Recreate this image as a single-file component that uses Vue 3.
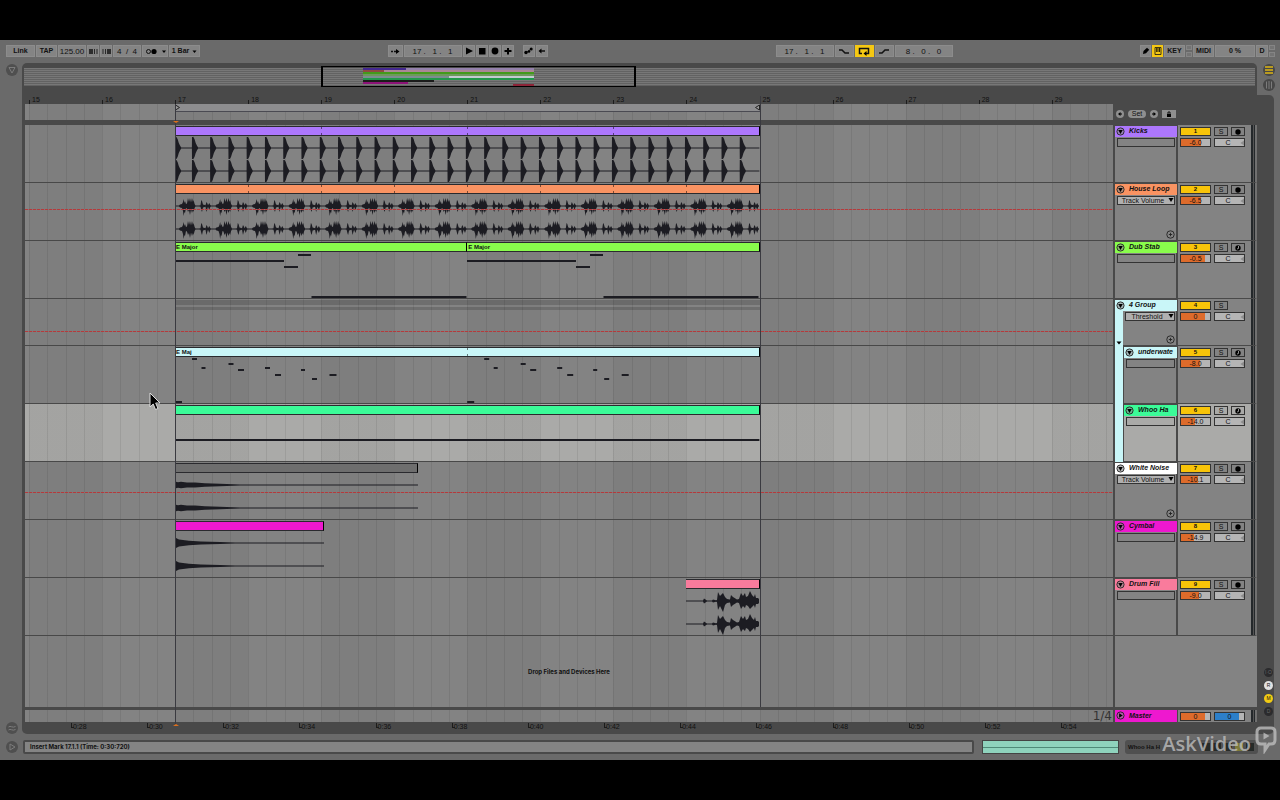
<template>
  <main class="daw">
    <header class="toolbar">
      <div class="group">
        <button class="tool w29" type="button">Link</button>
        <button class="tool w21" type="button">TAP</button>
        <input class="tool num w28" aria-label="Tempo" value="125.00" />
        <button class="tool w12" type="button" aria-label="Nudge down">
          <svg width="9" height="7"><path d="M1 1v5M3 1v5" class="heavy" /><path d="M5.5 1v5M8 1v5" class="thin" /></svg>
        </button>
        <button class="tool w12" type="button" aria-label="Nudge up">
          <svg width="9" height="7"><path d="M1 1v5M3.5 1v5" class="thin" /><path d="M6 1v5M8 1v5" class="heavy" /></svg>
        </button>
        <input class="tool num w28" aria-label="Time signature" value="4  /  4" />
        <button class="tool w26" type="button" aria-label="Metronome">
          <svg width="21" height="7">
            <circle cx="3.5" cy="3.5" r="2" class="outline" />
            <circle cx="9" cy="3.5" r="2.6" />
            <path d="M17 2.5h4l-2 2.5z" />
          </svg>
        </button>
        <button class="tool w31" type="button">
          1 Bar
          <svg width="8" height="7"><path d="M3.5 2.5h4l-2 2.5z" /></svg>
        </button>
      </div>

      <div class="middle">
        <div class="group">
          <button class="tool w15" type="button" aria-label="Follow">
            <svg width="10" height="7"><path d="M1 3.5h2M4 3.5h4" class="heavy" /><path d="M6 1l3.5 2.5L6 6z" /></svg>
          </button>
          <input class="tool num w58" aria-label="Arrangement position" value="17 .   1 .   1" />
          <button class="tool w12" type="button" aria-label="Play">
            <svg width="8" height="8"><path d="M1 .5l7 3.5L1 7.5z" /></svg>
          </button>
          <button class="tool w12" type="button" aria-label="Stop">
            <svg width="8" height="8"><path d="M1 1h6.5v6.5H1z" /></svg>
          </button>
          <button class="tool w12" type="button" aria-label="Record">
            <svg width="8" height="8"><circle cx="4" cy="4" r="3.4" /></svg>
          </button>
          <button class="tool w12" type="button" aria-label="Overdub">
            <svg width="8" height="8"><path d="M3 1h2v2h2.5v2H5v2.5H3V5H.5V3H3z" /></svg>
          </button>
          <span class="space"></span>
          <button class="tool w12" type="button" aria-label="Automation arm">
            <svg width="9" height="8">
              <path d="M2 6l5-4" class="line" /><circle cx="2" cy="5.5" r="1.7" /><circle cx="5" cy="4.5" r="1.3" /><circle cx="7.2" cy="2" r="1.5" />
            </svg>
          </button>
          <button class="tool w12" type="button" aria-label="Re-enable automation">
            <svg width="8" height="8"><path d="M.5 4l3-2.5v5z" /><path d="M3 4h4" class="heavy" /></svg>
          </button>
        </div>
        <div class="group">
          <input class="tool num w58" aria-label="Loop start" value="17 .   1 .   1" />
          <button class="tool w19" type="button" aria-label="Punch in">
            <svg width="12" height="7"><path d="M1 2h3l3 3h4" class="heavy" /></svg>
          </button>
          <button class="tool on w19" type="button" aria-label="Loop">
            <svg width="12" height="9"><path d="M4 6.5H1.5v-5h9v5H7.5" class="heavy" /><path d="M8.5 4v5L5.5 6.5z" /></svg>
          </button>
          <button class="tool w19" type="button" aria-label="Punch out">
            <svg width="12" height="7"><path d="M1 5h3l3-3h4" class="heavy" /></svg>
          </button>
          <input class="tool num w58" aria-label="Loop length" value="8 .   0 .   0" />
        </div>
      </div>

      <div class="group">
        <button class="tool w11" type="button" aria-label="Draw mode">
          <svg width="8" height="8"><path d="M1 7l.5-3L5 .8l2.2 2L4 6.3z" /></svg>
        </button>
        <button class="tool on w11" type="button" aria-label="Computer MIDI keyboard">
          <svg width="8" height="8"><path d="M1 .5h6v7H1z" class="thin" /><path d="M2.3 1h1.2v4H2.3zM4.6 1h1.2v4H4.6z" /></svg>
        </button>
        <button class="tool w21" type="button">KEY</button>
        <span class="leds"><i></i><i></i></span>
        <button class="tool w21" type="button">MIDI</button>
        <output class="tool w40">0 %</output>
        <button class="tool w12" type="button">D</button>
        <span class="leds"><i></i><i></i></span>
      </div>
    </header>

    <div class="body">
      <aside class="gutter">
        <button class="round" type="button" aria-label="Show browser">
          <svg viewBox="0 0 12 12"><path d="M3 3.5h6L6 9z" /></svg>
        </button>
        <button class="round" type="button" aria-label="Show groove pool">
          <svg viewBox="0 0 12 12"><path d="M2.5 5c2-2 4 1.5 7-.5M2.5 8c2-2 4 1.5 7-.5" /></svg>
        </button>
      </aside>

      <section class="panel" aria-label="Arrangement">
        <div class="overview">
          <svg viewBox="0 0 1231 18" preserveAspectRatio="none">
            <rect v-for="(o, i) in overview" :key="i" :x="o[0]" :y="o[1]" :width="o[2]" :height="2" :fill="o[3]" />
          </svg>
          <div class="viewport"></div>
        </div>

        <div class="arrangement">
          <div class="row">
            <div class="ruler">
              <div class="bars">
                <span v-for="n in 15" :key="n" class="bar" :style="{ left: at(n + 14) }">{{ n + 14 }}</span>
              </div>
              <div class="strip beats">
                <div class="loop" :style="span(17, 25)">
                  <svg width="5" height="7"><path d="M.5 1L4.5 3.5.5 6z" /></svg>
                  <svg width="5" height="7"><path d="M4.5 1L.5 3.5 4.5 6z" /></svg>
                </div>
              </div>
            </div>
            <div class="locators">
              <button class="pill" type="button" aria-label="Previous locator"><svg width="6" height="6"><path d="M1 3l2.5-2v4z" /><path d="M3 2.5h2v1H3z" /></svg></button>
              <button class="pill set" type="button">Set</button>
              <button class="pill" type="button" aria-label="Next locator"><svg width="6" height="6"><path d="M5 3L2.5 1v4z" /><path d="M1 2.5h2v1H1z" /></svg></button>
              <button class="pill lock" type="button" aria-label="Lock envelopes"><svg width="6" height="6"><path d="M1 3h4v3H1z" /><path d="M2 3V1h2v2" class="line" /></svg></button>
            </div>
          </div>

          <div
            v-for="t in tracks"
            :key="t.id"
            class="row track"
            :class="{ selected: t.selected, short: t.group, compact: t.nested }"
          >
            <div class="lane beats">
              <div v-for="(c, i) in t.clips" :key="i" class="clip" :style="span(c.start, c.end)">
                <div v-if="!t.group" class="clip-head" :style="{ background: c.color || t.color }">
                  {{ c.label }}
                  <i v-for="m in marks(c)" :key="m" class="mark" :style="{ left: m + '%' }"></i>
                </div>
                <div v-if="t.group" class="group-clips"></div>
                <svg v-else :viewBox="`0 0 ${(c.end - c.start) * BAR} 46`" preserveAspectRatio="none">
                  <path v-if="c.wave" :d="c.wave" class="wave" />
                  <rect v-for="(n, k) in c.notes" :key="k" :x="n[0]" :y="n[1]" :width="n[2]" height="2" class="note" />
                </svg>
              </div>
              <div v-if="t.automation" class="automation" :style="{ top: t.automation + 'px' }"></div>
            </div>

            <div class="head">
              <i v-if="t.nested" class="group-bar"></i>
              <div class="name-cell">
                <div class="name" :style="{ background: t.color }">
                  <button class="fold" type="button" :aria-label="'Fold ' + t.name">
                    <svg viewBox="0 0 10 10"><circle cx="5" cy="5" r="4" /><path d="M2.5 3.2h5L5 7.7z" /></svg>
                  </button>
                  <span>{{ t.name }}</span>
                </div>
                <div class="name-body">
                  <i v-if="t.group" class="group-bar"><svg width="6" height="4"><path d="M.5.5h5L3 3.5z" /></svg></i>
                  <div class="chooser">
                    <div class="pick" :class="{ filled: t.device }">
                      <select :aria-label="t.name + ' automation'">
                        <option>{{ t.device }}</option>
                      </select>
                      <svg v-if="t.device" width="6" height="6"><path d="M.5 1h5L3 5z" /></svg>
                    </div>
                    <button v-if="t.device" class="add" type="button" aria-label="Add automation lane">
                      <svg viewBox="0 0 8 8"><circle cx="4" cy="4" r="3.3" /><path d="M4 2.5v3M2.5 4h3" /></svg>
                    </button>
                  </div>
                </div>
              </div>
              <div class="mixer">
                <button class="box active" type="button">{{ t.id }}</button>
                <button class="box" type="button" aria-label="Solo">S</button>
                <button v-if="!t.group" class="box" type="button" aria-label="Arm">
                  <svg width="8" height="8">
                    <circle cx="4" cy="4" r="2.7" />
                    <path v-if="t.midi" d="M4.5 2v2.5L3 5" class="slot" />
                  </svg>
                </button>
                <i v-else></i>
                <input class="box level" :aria-label="t.name + ' volume'" :value="t.volume" :style="{ '--fill': t.fill + '%' }" />
                <div class="box pan">
                  <input :aria-label="t.name + ' pan'" value="C" />
                  <svg width="4" height="6"><path d="M4 .5v5L.5 3z" /></svg>
                </div>
              </div>
              <div class="meter"></div>
            </div>
          </div>

          <div class="row drop">
            <div class="lane beats">Drop Files and Devices Here</div>
            <div class="blank"></div>
          </div>

          <div class="row master">
            <div class="lane beats"><span class="zoom">1/4</span></div>
            <div class="head">
              <div class="name-cell">
                <div class="name">
                  <button class="fold" type="button" aria-label="Unfold Master">
                    <svg viewBox="0 0 10 10"><circle cx="5" cy="5" r="4" /><path d="M3.5 2.5v5L7.5 5z" /></svg>
                  </button>
                  <span>Master</span>
                </div>
              </div>
              <div class="mixer">
                <input class="box level" aria-label="Master volume" value="0" :style="{ '--fill': '83%' }" />
                <input class="box level cue" aria-label="Cue volume" value="0" :style="{ '--fill': '83%' }" />
              </div>
              <div class="meter"></div>
            </div>
          </div>

          <div class="times">
            <span v-for="n in 14" :key="n" class="time" :style="{ left: (46 + (n - 1) * 76.15) / 10.88 + '%' }">0:{{ 26 + n * 2 }}</span>
          </div>

          <div class="guides">
            <i class="guide start" :style="{ left: at(17) }"></i>
            <i class="guide end" :style="{ left: at(25) }"></i>
          </div>
        </div>
      </section>

      <aside class="rail">
        <div class="notch">
          <button class="round view" type="button" aria-label="Arrangement view">
            <svg viewBox="0 0 12 12"><path d="M2 2h8v2H2zM2 5h8v2H2zM2 8h8v2H2z" class="gold" /></svg>
          </button>
          <button class="round view" type="button" aria-label="Session view">
            <svg viewBox="0 0 12 12"><path d="M3.5 2.5v7M6 2v8M8.5 2.5v7" /></svg>
          </button>
        </div>
        <div class="toggles">
          <button v-for="g in toggles" :key="g.text" class="toggle" :class="g.kind" type="button">{{ g.text }}</button>
        </div>
      </aside>
    </div>

    <footer class="status">
      <button class="round" type="button" aria-label="Show info">
        <svg viewBox="0 0 12 12"><path d="M4 3l5 3-5 3z" /></svg>
      </button>
      <p class="message">Insert Mark 17.1.1 (Time: 0:30:720)</p>
      <div class="preview"></div>
      <div class="devices">
        <span>Whoo Ha H</span>
        <div class="chain"><i></i><i></i><i></i><i class="yellow"></i><i></i></div>
      </div>
    </footer>

    <div class="watermark">
      <span>AskVideo</span>
      <svg width="22" height="28" viewBox="0 0 22 28">
        <path d="M6 2h10q4 0 4 4v8q0 4-4 4h-2l-4 6v-6H6q-4 0-4-4V6q0-4 4-4z" />
        <path d="M8.5 6.5v7l6-3.5z" class="solid" />
      </svg>
    </div>
    <svg class="cursor" width="12" height="19" viewBox="0 0 12 19">
      <path d="M1 1v14l3.2-3 2.3 5.5 2.5-1L6.7 11H11z" />
    </svg>
  </main>
</template>

<script setup>
const BAR = 73.05
const FIRST = 14.945
const VISIBLE = 14.894

const at = (bar) => ((bar - FIRST) / VISIBLE) * 100 + '%'
const span = (from, to) => ({ left: at(from), width: ((to - from) / VISIBLE) * 100 + '%' })

const marks = (clip) => {
  if (!clip.loop) return []
  const length = clip.end - clip.start
  const out = []
  for (let b = clip.loop; b < length; b += clip.loop) out.push((b / length) * 100)
  return out
}

// Envelope points are [x, up, down]; one closed shape per channel
const envelope = (points, centers = [12, 35]) =>
  centers
    .map((c) => {
      const top = points.map(([x, up]) => `${x.toFixed(1)} ${c - up}`)
      const bottom = points.map(([x, up, down]) => `${x.toFixed(1)} ${c + (down ?? up)}`).reverse()
      return `M${top.concat(bottom).join('L')}Z`
    })
    .join('')

const kickPoints = []
for (let i = 0; i < 32; i++) {
  const x = i * (BAR / 4)
  const s = i ? x - 1.4 : 0
  kickPoints.push([s, 0.5], [s + 0.1, 11], [s + 1.4, 11], [s + 2.6, 9], [s + 3.8, 5], [s + 5, 2.5], [s + 6.2, 0.5])
}
kickPoints.push([8 * BAR, 0.5])

const hit = [
  [0, 0.6], [4, 0.6], [5, 1.5], [7, 2], [8, 4, 5], [8.6, 7, 10], [9.4, 3, 6], [10, 5, 7], [11, 2], [12, 2.5],
  [13, 8, 6], [14, 4], [15, 8, 9], [16, 3.5], [17, 8, 7], [18, 4], [18.6, 6], [19.6, 2], [20.5, 0.6], [24, 0.6],
  [25.5, 0.8], [26.3, 6, 4], [27, 5, 6], [28, 1.5], [30.5, 0.8], [31.5, 4, 6], [32.4, 2.5], [33, 0.8],
  [34.3, 3, 4], [35.3, 1], [36, 0.6]
]
const loopPoints = []
for (let i = 0; i < 16; i++) {
  hit.forEach(([x, up, down]) => loopPoints.push([x + (i * BAR) / 2, up, down]))
}

const fillPoints = [
  [0, 0.5], [17, 0.5], [18, 2.5], [21, 0.6], [26, 0.6], [27, 1.5], [30, 0.8], [31, 1], [32, 9], [34, 5],
  [36, 7, 9], [37, 8, 11], [39, 4], [41, 2], [44, 1.5], [45, 6], [47, 4], [51, 1.5], [53, 2], [55, 8],
  [57, 5], [59, 8, 7], [60, 4], [62, 5], [64, 10, 8], [66, 6], [68, 4], [69, 7], [70, 3], [72, 3], [73, 2]
]
const noisePoints = [[0, 3.4], [3, 2.8], [6, 3.3], [12, 2.6], [20, 2.4], [30, 1.7], [45, 1.2], [65, 0.6], [243, 0.5]]
const cymbalPoints = [[0, 8], [1, 5], [4, 3.5], [8, 3], [14, 2.2], [26, 1.6], [45, 0.9], [60, 0.5], [149, 0.5]]

const stab = [[0, 8, 109], [109, 14, 14], [123, 2, 13], [136.5, 44, 155]]
const melody = [
  [0, 44, 7], [17, 1, 5], [26.5, 10, 4], [53.5, 6, 5], [63, 12, 6], [90, 10, 5], [100, 17, 6],
  [126, 12, 4], [137, 21, 5], [154.5, 17, 7]
]
const repeated = melody.concat(melody.map(([x, y, w]) => [x + 4 * BAR, y, w]))

const tracks = [
  { id: 1, name: 'Kicks', color: '#ad77fd', volume: '-6.0', fill: 70,
    clips: [{ start: 17, end: 25, loop: 2, wave: envelope(kickPoints) }] },
  { id: 2, name: 'House Loop', color: '#f99362', volume: '-6.5', fill: 68, device: 'Track Volume', automation: 26,
    clips: [{ start: 17, end: 25, loop: 1, wave: envelope(loopPoints) }] },
  { id: 3, name: 'Dub Stab', color: '#89fc4c', volume: '-0.5', fill: 83, midi: true,
    clips: [
      { start: 17, end: 21, label: 'E Major', notes: stab },
      { start: 21, end: 25, label: 'E Major', notes: stab }
    ] },
  { id: 4, name: '4 Group', color: '#c9f6f8', volume: '0', fill: 83, device: 'Threshold', group: true, automation: 32,
    clips: [{ start: 17, end: 25 }] },
  { id: 5, name: 'underwate', color: '#c9f6f8', volume: '-8.0', fill: 64, nested: true, midi: true,
    clips: [{ start: 17, end: 25, label: 'E Maj', loop: 4, notes: repeated }] },
  { id: 6, name: 'Whoo Ha', color: '#3bfb98', volume: '-14.0', fill: 49, nested: true, midi: true, selected: true,
    clips: [{ start: 17, end: 25, notes: [[0, 24, 584.4]] }] },
  { id: 7, name: 'White Noise', color: '#ffffff', volume: '-10.1', fill: 60, device: 'Track Volume', automation: 30,
    clips: [{ start: 17, end: 20.33, color: '#6e6e6e', wave: envelope(noisePoints) }] },
  { id: 8, name: 'Cymbal', color: '#ee18cf', volume: '-14.9', fill: 45,
    clips: [{ start: 17, end: 19.04, wave: envelope(cymbalPoints) }] },
  { id: 9, name: 'Drum Fill', color: '#f97b9c', volume: '-9.0', fill: 62,
    clips: [{ start: 24, end: 25, wave: envelope(fillPoints) }] }
]

const overview = [
  [339, 0, 43, '#44288f'], [382, 0, 128, '#9481ab'],
  [339, 2, 21, '#8d4a42'], [360, 2, 150, '#a98795'],
  [339, 4, 171, '#439a1b'],
  [339, 6, 171, '#6c9a5c'],
  [339, 8, 86, '#7b8d8f'], [425, 8, 85, '#c3cbcf'],
  [339, 10, 171, '#21984b'],
  [339, 12, 71, '#1b1b1b'],
  [339, 14, 45, '#8c1277'],
  [489, 16, 21, '#8c2438']
]

const toggles = [
  { text: 'I·O', kind: 'off' },
  { text: 'R', kind: 'white' },
  { text: 'M', kind: 'yellow' },
  { text: 'D', kind: 'off' }
]
</script>

<style>
body {
  margin: 0;
  background: #000;
}
</style>

<style scoped>
* {
  box-sizing: border-box;
}

.daw {
  --ui: #6a6a6a;
  --dark: #494949;
  --ink: #1c1c22;
  position: relative;
  margin: 40px 0;
  overflow: hidden;
  background: var(--ui);
  color: #111;
  font-family: "Liberation Sans", Arial, sans-serif;
  font-size: 7px;
  line-height: 8px;
}

button,
input,
select,
output {
  margin: 0;
  padding: 0;
  border: 0;
  border-radius: 0;
  background: none;
  color: inherit;
  font: inherit;
}

svg {
  display: block;
}

.toolbar {
  display: flex;
  justify-content: space-between;
  height: 23px;
  padding: 5px 5px 0 6px;
}

.middle {
  display: flex;
  gap: 228px;
}

.group {
  display: flex;
  gap: 1px;
}

.tool {
  display: flex;
  align-items: center;
  justify-content: center;
  height: 12px;
  border: 1px solid #8c8c8c;
  background: #848484;
  font-weight: 700;
  text-align: center;
}

.tool.num {
  font-size: 8px;
  font-weight: 400;
  white-space: pre;
}

.tool.on {
  border-color: #f5c813;
  background: #f5c813;
}

.tool .line,
.tool .thin,
.tool .heavy,
.tool .outline {
  fill: none;
  stroke: #111;
}

.tool .heavy {
  stroke-width: 1.5;
}

.tool .thin {
  stroke-width: 0.8;
}

.w11 { width: 11px; }
.w12 { width: 12px; }
.w15 { width: 15px; }
.w19 { width: 19px; }
.w21 { width: 21px; }
.w26 { width: 26px; }
.w28 { width: 28px; }
.w29 { width: 29px; }
.w31 { width: 31px; }
.w40 { width: 40px; }
.w58 { width: 58px; }

.space {
  width: 7px;
}

.leds {
  display: flex;
  flex-direction: column;
  justify-content: space-between;
  width: 6px;
  height: 12px;
}

.leds i {
  height: 5px;
  border: 1px solid #858585;
  background: #747474;
}

.body {
  display: flex;
}

.gutter {
  display: flex;
  flex-direction: column;
  justify-content: space-between;
  width: 22px;
  padding: 1px 0 0 6px;
}

.round {
  flex: none;
  width: 12px;
  height: 12px;
  border-radius: 50%;
  background: #4f4f4f;
}

.round path {
  fill: none;
  stroke: #7c7c7c;
}

.round .gold {
  fill: #b89a20;
  stroke: none;
}

.panel {
  flex: 1;
  min-width: 0;
  padding-top: 5px;
  border-radius: 5px 5px 0 5px;
  background: var(--dark);
}

.overview {
  position: relative;
  height: 18px;
  margin: 0 2px;
  background: repeating-linear-gradient(#777 0 1px, #626262 1px 2px);
}

.overview svg {
  width: 100%;
  height: 100%;
}

.viewport {
  position: absolute;
  top: -2px;
  bottom: -1px;
  left: 24.1%;
  width: 25.6%;
  border: 1px solid #000;
  border-width: 1px 2px;
}

.arrangement {
  position: relative;
  padding-left: 3px;
}

.row {
  display: flex;
}

.beats {
  background:
    repeating-linear-gradient(90deg, rgb(0 0 0 / 8%) 0.37%, rgb(0 0 0 / 8%) calc(0.37% + 1px), transparent calc(0.37% + 1px), transparent 2.0485%),
    repeating-linear-gradient(90deg, rgb(0 0 0 / 4%) 0.37%, rgb(0 0 0 / 4%) 7.084%, transparent 7.084%, transparent 13.798%),
    var(--lane, #838383);
}

.ruler {
  flex: 1;
  min-width: 0;
  margin-bottom: 5px;
}

.bars {
  position: relative;
  height: 18px;
}

.bar {
  position: absolute;
  bottom: 0;
  padding-left: 3px;
}

.bar::before {
  position: absolute;
  bottom: 0;
  left: 0;
  width: 1px;
  height: 4px;
  background: #1c1c1c;
  content: "";
}

.strip {
  position: relative;
  height: 16px;
}

.loop {
  position: absolute;
  top: 0;
  display: flex;
  justify-content: space-between;
  height: 8px;
  border-bottom: 1px solid #4a4a52;
  background: #8d8d8f;
}

.loop path {
  fill: #999;
  stroke: #222;
}

.locators {
  display: flex;
  align-items: center;
  gap: 4px;
  width: 144px;
  padding: 20px 0 3px 3px;
}

.pill {
  display: flex;
  align-items: center;
  justify-content: center;
  width: 8px;
  height: 8px;
  border-radius: 4px;
  background: #8f8f8f;
}

.pill.set {
  width: 18px;
}

.pill.lock {
  width: 14px;
  border-radius: 0;
}

.pill .line {
  fill: none;
  stroke: #111;
}

.track {
  height: 58px;
}

.track.short {
  height: 47px;
}

.lane {
  position: relative;
  flex: 1;
  min-width: 0;
  border-bottom: 1px solid #484848;
}

.selected {
  --lane: #aaaaa8;
}

.clip {
  position: absolute;
  top: 1px;
  bottom: 0;
  display: flex;
  flex-direction: column;
}

.selected .clip {
  border-left: 1px solid #d98b4a;
}

.clip svg {
  flex: 1;
  width: 100%;
  min-height: 0;
}

.clip-head {
  position: relative;
  height: 10px;
  padding-left: 1px;
  border: 1px solid #2a2a2e;
  border-right-color: #000;
  border-left-width: 0;
  font-size: 6px;
  font-weight: 700;
}

.mark {
  position: absolute;
  top: 0;
  bottom: 0;
  width: 1px;
  background: linear-gradient(rgb(0 0 0 / 50%) 0 2px, transparent 2px 6px, rgb(0 0 0 / 50%) 6px);
}

.group-clips {
  height: 10px;
  background: linear-gradient(rgb(0 0 0 / 16%) 0 5px, transparent 5px 7px, rgb(0 0 0 / 16%) 7px);
}

.wave,
.note {
  fill: var(--ink);
}

.automation {
  position: absolute;
  right: 0;
  left: 0;
  height: 1px;
  background: repeating-linear-gradient(90deg, #b53a3c 0 3px, #8a7272 3px 4px);
}

.head,
.blank {
  display: flex;
  width: 144px;
  border-left: 2px solid var(--dark);
}

.name-cell {
  display: flex;
  flex: 1;
  flex-direction: column;
  border-right: 1px solid var(--dark);
}

.name {
  display: flex;
  align-items: center;
  gap: 4px;
  height: 12px;
  padding: 0 0 1px 1px;
  border-top: 1px solid var(--dark);
  font-style: italic;
  font-weight: 700;
  white-space: nowrap;
}

.fold {
  width: 9px;
  height: 9px;
}

.fold circle {
  fill: #8a8a8a;
  fill-opacity: 0.6;
  stroke: #222;
}

.name-body {
  display: flex;
  flex: 1;
  border-right: 1px solid var(--dark);
  background: var(--lane, #838383);
}

.group-bar {
  display: flex;
  flex: none;
  align-items: flex-end;
  width: 8px;
  padding: 0 1px 1px;
  background: #c9f6f8;
}

.compact .group-bar {
  width: 9px;
  border-right: 1px solid var(--dark);
}

.chooser {
  display: flex;
  flex: 1;
  flex-direction: column;
  align-items: flex-end;
  justify-content: space-between;
  padding: 1px 1px 1px 2px;
  border-bottom: 1px solid var(--dark);
}

.pick {
  position: relative;
  width: 100%;
  height: 9px;
  border: 1px solid #333;
}

.pick.filled {
  background: #b0b0b0;
}

.pick select {
  display: block;
  width: 100%;
  height: 7px;
  padding-right: 6px;
  appearance: none;
  line-height: 7px;
  text-align-last: center;
}

.pick svg {
  position: absolute;
  top: 0;
  right: 0;
  pointer-events: none;
}

.add {
  width: 9px;
  height: 9px;
}

.add svg {
  fill: none;
  stroke: #222;
  stroke-width: 0.8;
}

.mixer {
  display: grid;
  grid-template-rows: 9px 9px;
  grid-template-columns: 31px 14px 14px;
  gap: 2px 3px;
  width: 73px;
  padding: 2px 3px 0 2px;
  border-bottom: 1px solid var(--dark);
  background: var(--lane, #838383);
}

.box {
  display: flex;
  align-items: center;
  justify-content: center;
  min-width: 0;
  border: 1px solid #333;
  line-height: 7px;
  text-align: center;
}

.box.active {
  background: #f8c409;
  font-size: 6px;
  font-weight: 700;
}

.box.level {
  background: linear-gradient(90deg, var(--level, #dd6b2b) var(--fill), #b5b5b5 var(--fill));
}

.box.cue {
  --level: #2c7fc9;
  grid-column: span 2;
}

.box.pan {
  position: relative;
  grid-column: span 2;
  background: #b5b5b5;
}

.pan input {
  width: 100%;
  padding-right: 3px;
  text-align: center;
}

.pan svg {
  position: absolute;
  right: 0;
  fill: #8c8c8c;
}

.slot {
  fill: none;
  stroke: #909090;
}

.meter {
  width: 6px;
  border-right: 2px solid #707070;
  border-bottom: 1px solid var(--dark);
  background: linear-gradient(90deg, #24282b 0 2px, #555 2px 3px, #24282b 3px);
}

.drop .lane {
  display: flex;
  align-items: center;
  justify-content: center;
  height: 71px;
  border: 0;
  font-family: Inter, sans-serif;
  font-size: 6px;
  font-weight: 700;
}

.blank {
  background: #838383;
}

.master {
  height: 12px;
  margin-top: 3px;
}

.master .lane,
.master .mixer,
.master .meter {
  border-bottom: 0;
}

.master .mixer {
  grid-template-rows: 9px;
}

.master .name {
  border-top: 0;
  background: #ee18cf;
}

.zoom {
  display: block;
  padding-right: 1px;
  color: #333;
  font-family: "DejaVu Sans", sans-serif;
  font-size: 12px;
  line-height: 12px;
  text-align: right;
}

.times {
  position: relative;
  height: 12px;
  margin-right: 144px;
}

.time {
  position: absolute;
  top: 1px;
  padding-left: 2px;
}

.time::before {
  position: absolute;
  top: 0;
  left: 0;
  width: 2px;
  height: 4px;
  border-bottom: 1px solid #1c1c1c;
  border-left: 1px solid #1c1c1c;
  content: "";
}

.guides {
  position: absolute;
  inset: 0 144px 0 3px;
  pointer-events: none;
}

.guide {
  position: absolute;
  top: 18px;
  bottom: 10px;
  width: 1px;
  background: #3a3a40;
}

.guide.end {
  top: 10px;
  bottom: 27px;
}

.start::before,
.start::after {
  position: absolute;
  left: -2px;
  border: 3px solid transparent;
  border-width: 2px 3px;
  content: "";
}

.start::before {
  top: 17px;
  border-top-color: #e0701c;
}

.start::after {
  bottom: -2px;
  border-bottom-color: #e0701c;
}

.rail {
  display: flex;
  flex-direction: column;
  width: 23px;
}

.notch {
  display: flex;
  flex-direction: column;
  align-items: center;
  gap: 3px;
  height: 32px;
  padding-top: 1px;
}

.view {
  background: #474747;
}

.toggles {
  display: flex;
  flex: 1;
  flex-direction: column;
  align-items: flex-end;
  justify-content: flex-end;
  gap: 4px;
  margin-right: 6px;
  padding: 0 1px 18px 0;
  border-radius: 0 5px 5px 0;
  background: var(--dark);
}

.toggle {
  width: 9px;
  height: 9px;
  border-radius: 50%;
  font-size: 5px;
  line-height: 9px;
  text-align: center;
}

.toggle.off {
  background: #2b2b2d;
  color: #666;
}

.toggle.white {
  background: #e2e2e2;
}

.toggle.yellow {
  background: #f1cb14;
}

.status {
  display: flex;
  align-items: center;
  height: 26px;
  padding: 0 22px 0 6px;
}

.message {
  flex: 1;
  height: 14px;
  margin: 0 8px 0 5px;
  padding-left: 5px;
  border: 2px solid var(--dark);
  border-radius: 2px;
  background: #848484;
  font-family: Inter, sans-serif;
  font-size: 6px;
  font-weight: 700;
  line-height: 10px;
}

.preview {
  width: 137px;
  height: 14px;
  border: 1px solid #444;
  background: linear-gradient(#8fd3bd 0 6px, #4f8a78 6px 7px, #8fd3bd 7px);
}

.devices {
  display: flex;
  align-items: center;
  justify-content: space-between;
  width: 133px;
  height: 14px;
  margin-left: 6px;
  padding: 0 4px 0 3px;
  border-radius: 3px;
  background: #505050;
  font-size: 6px;
  font-weight: 700;
}

.chain {
  display: flex;
  gap: 3px;
}

.chain i {
  width: 8px;
  height: 8px;
  background: #262a28;
}

.chain .yellow {
  background: #7d7a3a;
}

.watermark {
  position: absolute;
  right: 3px;
  bottom: 2px;
  display: flex;
  gap: 4px;
  align-items: flex-start;
  color: rgb(190 190 190 / 80%);
  font-family: "Open Sans", sans-serif;
  font-size: 20px;
  font-weight: 600;
  line-height: 28px;
  pointer-events: none;
}

.watermark svg {
  margin-top: -4px;
}

.watermark path {
  fill: none;
  stroke: rgb(190 190 190 / 80%);
  stroke-width: 3;
}

.watermark .solid {
  fill: rgb(190 190 190 / 80%);
  stroke: none;
}

.cursor {
  position: absolute;
  top: 352px;
  left: 149px;
  fill: #000;
  stroke: #ddd;
  pointer-events: none;
}
</style>
